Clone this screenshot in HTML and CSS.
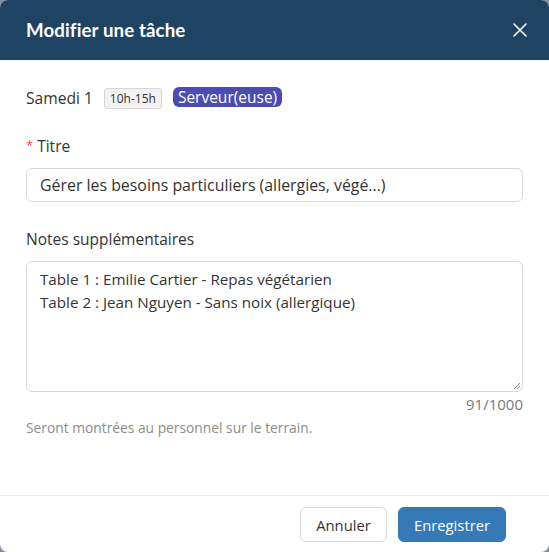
FILE: index.html
```html
<!DOCTYPE html>
<html lang="fr">
<head>
<meta charset="utf-8">
<link rel="stylesheet" href="styles.css">
</head>
<body>
<div class="modal">
  <header class="modal-header">
    <h1 class="modal-title">Modifier une tâche</h1>
    <button class="close" aria-label="Fermer">
      <svg width="14" height="14" viewBox="0 0 14 14"><path d="M1 1L13 13M13 1L1 13" stroke="#fff" stroke-width="1.6" stroke-linecap="round"/></svg>
    </button>
  </header>
  <main class="modal-body">
    <div class="meta">
      <span class="day">Samedi 1</span>
      <span class="tag-time">10h-15h</span>
      <span class="tag-role">Serveur(euse)</span>
    </div>
    <label class="label"><span class="req">*</span>Titre</label>
    <div class="input">Gérer les besoins particuliers (allergies, végé...)</div>
    <label class="label notes-label">Notes supplémentaires</label>
    <div class="textarea">
      <div>Table 1 : Emilie Cartier - Repas végétarien</div>
      <div>Table 2 : Jean Nguyen - Sans noix (allergique)</div>
      <svg class="grip" width="8" height="8" viewBox="0 0 8 8"><path d="M7 1L1 7M7 4L4 7" stroke="#888" stroke-width="1"/></svg>
    </div>
    <div class="count">91/1000</div>
    <p class="help">Seront montrées au personnel sur le terrain.</p>
  </main>
  <footer class="modal-footer">
    <button class="btn btn-default">Annuler</button>
    <button class="btn btn-primary">Enregistrer</button>
  </footer>
</div>
</body>
</html>
```
FILE: styles.css
```css
html, body {
  margin: 0;
  padding: 0;
  background: #8a8f96;
}
body {
  width: 549px;
  height: 552px;
  font-family: "Open Sans", "Liberation Sans", sans-serif;
  color: #333;
}
.modal {
  width: 549px;
  height: 552px;
  background: #fff;
  border-radius: 8px;
  overflow: hidden;
  display: flex;
  flex-direction: column;
}
.modal-header {
  height: 60px;
  background: #1e4363;
  display: flex;
  align-items: center;
  justify-content: space-between;
  padding: 0 22px 0 26px;
  box-sizing: border-box;
  flex: none;
}
.modal-title {
  margin: 0;
  color: #fff;
  font-family: "Lato", "Noto Sans", sans-serif;
  font-weight: 700;
  font-size: 18.7px;
  letter-spacing: 0.1px;
}
.close {
  background: none;
  border: 0;
  padding: 0;
  width: 14px;
  height: 14px;
  display: flex;
}
.modal-body {
  flex: 1;
  padding: 27px 26px 0 26px;
}
.meta {
  display: flex;
  align-items: center;
  height: 22px;
  font-size: 15.6px;
}
.day {
  color: #333;
  margin-right: 11px;
}
.tag-time {
  font-size: 12px;
  background: #f2f2f2;
  border: 1px solid #d6d6d6;
  border-radius: 3px;
  padding: 0 5px;
  height: 19px;
  line-height: 19px;
  color: #333;
  margin-right: 11px;
}
.tag-role {
  background: #4a4cb0;
  color: #fff;
  font-size: 15.5px;
  border-radius: 6px;
  padding: 0 5px;
  height: 20px;
  line-height: 20px;
  margin-top: -2px;
}
.label {
  display: block;
  font-size: 15.5px;
  color: #333;
  margin-top: 26px;
  line-height: 22px;
}
.req {
  color: #ff4d4f;
  font-size: 13px;
  margin-right: 4px;
  position: relative;
  top: -2px;
}
.input {
  margin-top: 10px;
  height: 34px;
  box-sizing: border-box;
  border: 1px solid #d9d9d9;
  border-radius: 6px;
  padding: 0 13px;
  line-height: 32px;
  font-size: 15.9px;
  color: #333;
}
.notes-label {
  margin-top: 26px;
}
.textarea {
  margin-top: 11px;
  height: 131px;
  box-sizing: border-box;
  border: 1px solid #d9d9d9;
  border-radius: 6px;
  padding: 6px 13px;
  font-size: 15.2px;
  line-height: 23px;
  color: #333;
  position: relative;
}
.grip {
  position: absolute;
  right: 1px;
  bottom: 1px;
}
.count {
  text-align: right;
  font-size: 15px;
  color: #7a7a7a;
  line-height: 22px;
  margin-top: 1px;
}
.help {
  margin: 3px 0 0 0;
  font-size: 13.8px;
  color: #8c8c8c;
  line-height: 20px;
}
.modal-footer {
  flex: none;
  height: 57px;
  box-sizing: border-box;
  border-top: 1px solid #e8e8e8;
  display: flex;
  justify-content: flex-end;
  align-items: flex-start;
  gap: 11px;
  padding: 11px 43px 0 0;
}
.btn {
  font-family: "Open Sans", "Liberation Sans", sans-serif;
  font-size: 14.8px;
  height: 35px;
  border-radius: 6px;
  padding: 0;
  cursor: pointer;
}
.btn-default {
  background: #fff;
  border: 1px solid #d9d9d9;
  color: #333;
  width: 87px;
}
.btn-primary {
  background: #357ab7;
  border: 1px solid #357ab7;
  color: #fff;
  width: 108px;
}
```
